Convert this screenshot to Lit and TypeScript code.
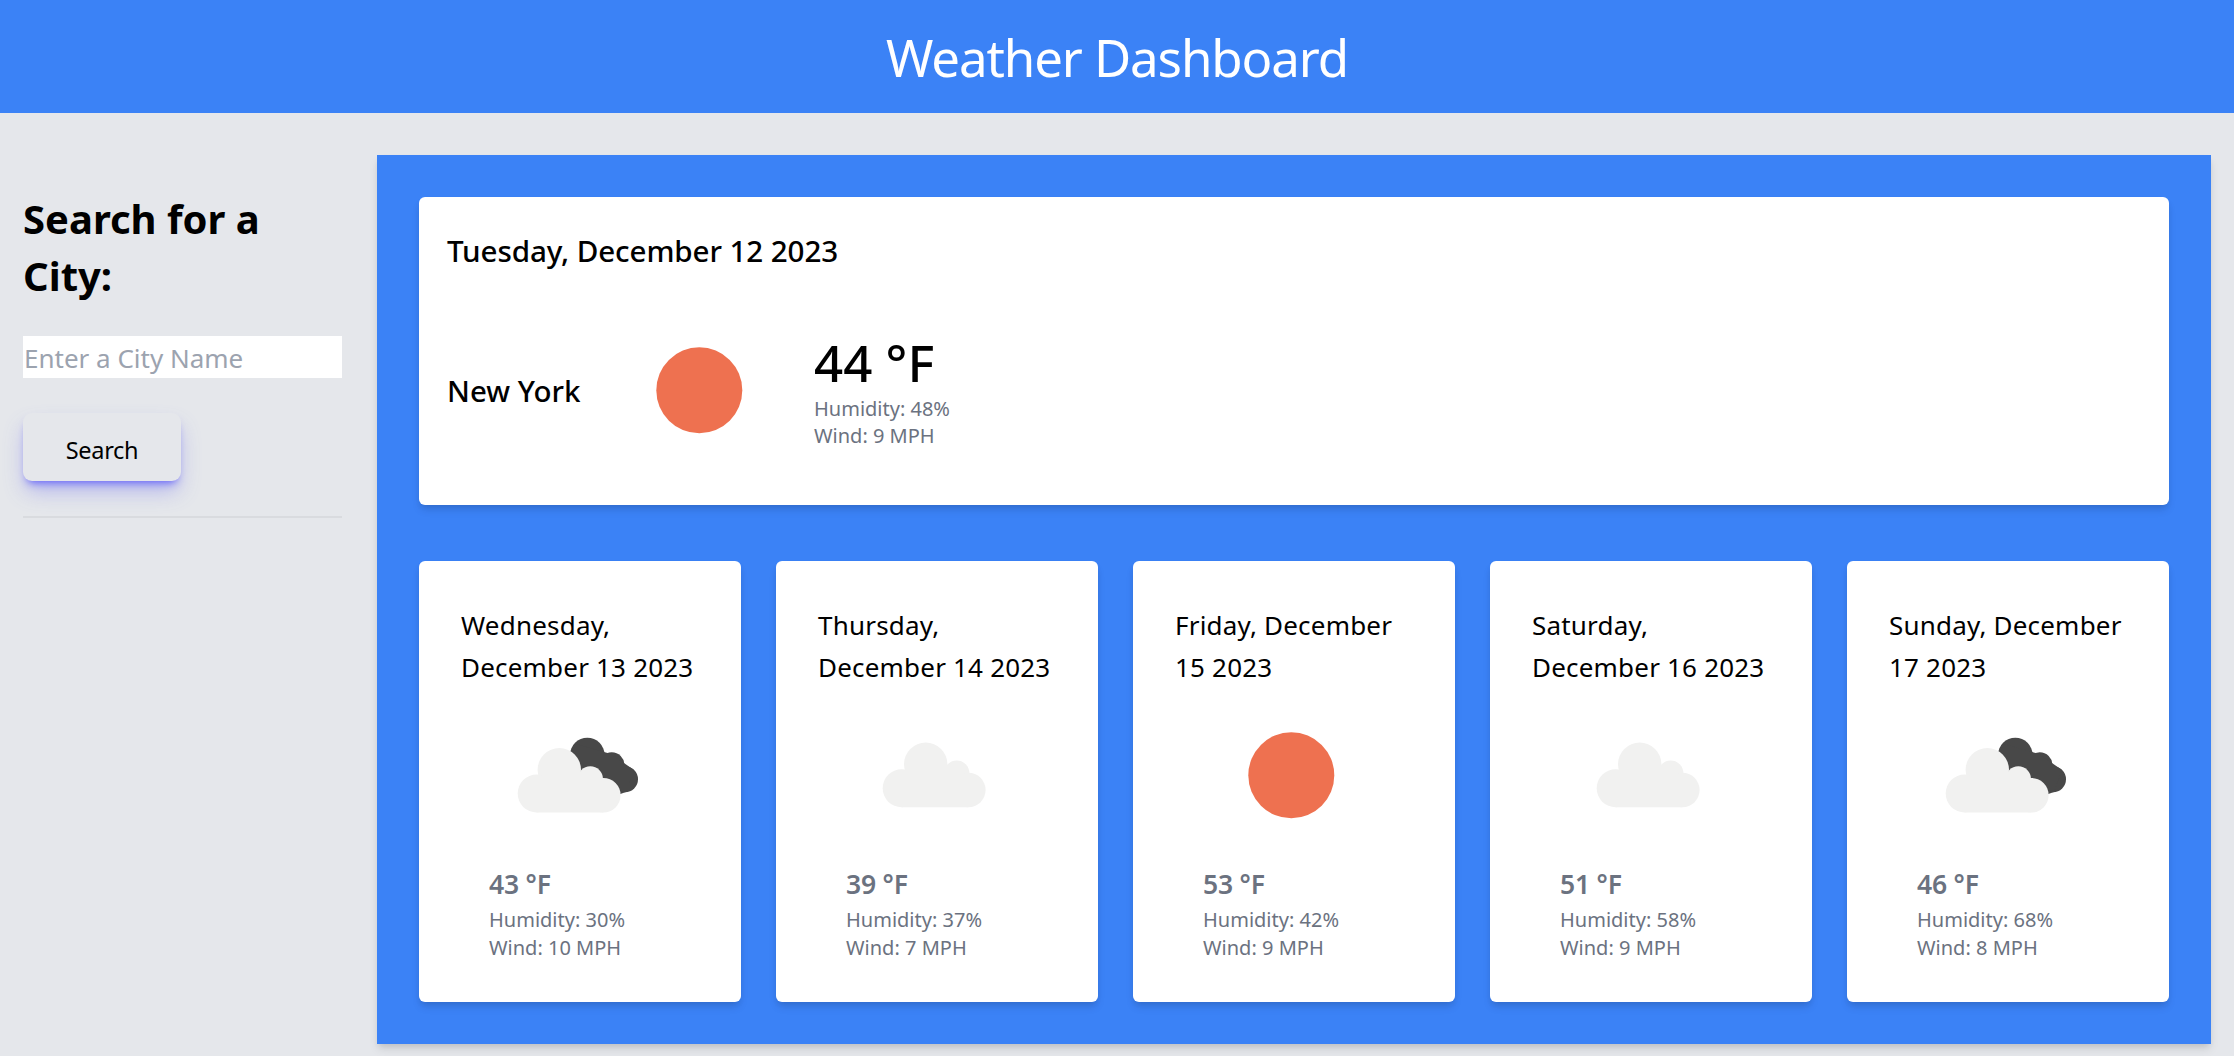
import { LitElement, html, css, svg } from 'lit';
import { customElement } from 'lit/decorators.js';

type Sky = 'clear' | 'cloudy' | 'broken';

const forecast: { date: string; sky: Sky; temp: number; humidity: number; wind: number }[] = [
  { date: 'Wednesday, December 13 2023', sky: 'broken', temp: 43, humidity: 30, wind: 10 },
  { date: 'Thursday, December 14 2023', sky: 'cloudy', temp: 39, humidity: 37, wind: 7 },
  { date: 'Friday, December 15 2023', sky: 'clear', temp: 53, humidity: 42, wind: 9 },
  { date: 'Saturday, December 16 2023', sky: 'cloudy', temp: 51, humidity: 58, wind: 9 },
  { date: 'Sunday, December 17 2023', sky: 'broken', temp: 46, humidity: 68, wind: 8 },
];

function skyIcon(sky: Sky) {
  let body;
  if (sky === 'clear') {
    body = svg`<circle cx="71.3" cy="71.3" r="43" fill="#ee7150"></circle>`;
  } else if (sky === 'cloudy') {
    body = svg`
      <g fill="#f1f1f0">
        <circle cx="62.7" cy="60.3" r="21.7"></circle>
        <circle cx="93.7" cy="69.3" r="12.7"></circle>
        <circle cx="38.7" cy="84.3" r="19"></circle>
        <circle cx="105.3" cy="86" r="17.3"></circle>
        <rect x="38.7" y="70" width="66.6" height="33.3"></rect>
      </g>`;
  } else {
    body = svg`
      <g fill="#484848">
        <circle cx="81.3" cy="51" r="17.3"></circle>
        <circle cx="105.7" cy="61" r="12.7"></circle>
        <circle cx="119" cy="75.3" r="13"></circle>
        <polygon points="70,40 105,50 128,66 120,88 100,95 60,70"></polygon>
      </g>
      <g fill="#f1f1f0">
        <circle cx="53.3" cy="65.8" r="21.7"></circle>
        <circle cx="84.3" cy="75" r="12.7"></circle>
        <circle cx="30.7" cy="89.5" r="19"></circle>
        <circle cx="97.3" cy="91.2" r="17.3"></circle>
        <rect x="30.7" y="75" width="66.6" height="33.5"></rect>
      </g>`;
  }
  return html`<svg class="icon" viewBox="0 0 142 142" width="142" height="142">${body}</svg>`;
}

@customElement('app-root')
export class AppRoot extends LitElement {
  static styles = css`
    :host {
      display: block;
      min-height: 1056px;
      background: #e5e7eb;
      color: #000;
      font-family: 'Noto Sans', 'Liberation Sans', sans-serif;
    }

    header {
      height: 113px;
      background: #3b82f6;
      color: #fff;
      display: flex;
      align-items: center;
      justify-content: center;
      font-size: 51px;
      letter-spacing: -1.1px;
    }

    main {
      display: flex;
      padding: 42px 23px 12px;
      gap: 35px;
    }

    .sidebar {
      width: 319px;
      flex: none;
      padding-top: 35px;
    }

    h2 {
      margin: 0 0 32px;
      font-size: 40px;
      line-height: 57px;
      font-weight: 700;
    }

    input {
      display: block;
      box-sizing: border-box;
      width: 100%;
      height: 42px;
      border: 0;
      padding: 2px 1px 0;
      background: #fff;
      font: inherit;
      font-size: 26px;
    }

    input::placeholder {
      color: #9ca3af;
      opacity: 1;
    }

    button {
      display: block;
      margin-top: 35px;
      width: 158px;
      height: 68px;
      border: 0;
      border-radius: 9px;
      padding: 5px 0 0;
      background: #e5e7eb;
      color: #000;
      font: inherit;
      font-size: 23.5px;
      letter-spacing: -0.3px;
      box-shadow: 0 12px 21px -3px rgba(99, 102, 241, 0.42), 0 6px 8px -5px #5a55ff;
    }

    .sidebar hr {
      margin: 35px 0 0;
      border: 0;
      border-top: 2px solid #d9dbdf;
    }

    .panel {
      flex: 1;
      min-width: 0;
      padding: 42px;
      background: #3b82f6;
      box-shadow: 0 6px 9px -1px rgba(0, 0, 0, 0.1), 0 3px 6px -2px rgba(0, 0, 0, 0.1);
    }

    .card {
      background: #fff;
      border-radius: 6px;
      box-shadow: 0 6px 9px -1px rgba(0, 0, 0, 0.1), 0 3px 6px -2px rgba(0, 0, 0, 0.1);
    }

    .today {
      padding: 28px 28px 44px;
    }

    .today h3 {
      margin: 0 0 43px;
      font-size: 29.6px;
      line-height: 51px;
      font-weight: 500;
      letter-spacing: -0.1px;
    }

    .today-row {
      display: flex;
      align-items: center;
    }

    .city {
      width: 181px;
      flex: none;
      font-size: 29.5px;
      font-weight: 500;
    }

    .icon {
      display: block;
      flex: none;
    }

    .today .readings {
      align-self: flex-start;
      margin: 15px 0 0 44px;
    }

    .today .temp {
      margin-bottom: 4px;
      font-size: 51px;
      line-height: 57px;
      font-weight: 500;
    }

    .detail {
      color: #6b7280;
      font-size: 20px;
      line-height: 27px;
    }

    .days {
      display: grid;
      grid-template-columns: repeat(5, 1fr);
      gap: 35px;
      margin-top: 56px;
    }

    .day {
      padding: 44px 43px 40px 42px;
    }

    .day h4 {
      margin: 0 0 16px;
      font-size: 26px;
      line-height: 41.5px;
      font-weight: 400;
      letter-spacing: 0.2px;
    }

    .day .icon {
      margin-left: 45px;
    }

    .day .readings {
      margin: 20px 0 0 28px;
    }

    .day .temp {
      margin-bottom: 4px;
      color: #6b7280;
      font-size: 26.5px;
      line-height: 36px;
      font-weight: 600;
      letter-spacing: -0.2px;
    }

    .day .detail {
      line-height: 28px;
    }
  `;

  render() {
    return html`
      <header>Weather Dashboard</header>
      <main>
        <aside class="sidebar">
          <h2>Search for a City:</h2>
          <input type="text" placeholder="Enter a City Name" />
          <button>Search</button>
          <hr />
        </aside>
        <section class="panel">
          <div class="card today">
            <h3>Tuesday, December 12 2023</h3>
            <div class="today-row">
              <div class="city">New York</div>
              ${skyIcon('clear')}
              <div class="readings">
                <div class="temp">44 °F</div>
                <div class="detail">Humidity: 48%</div>
                <div class="detail">Wind: 9 MPH</div>
              </div>
            </div>
          </div>
          <div class="days">
            ${forecast.map(
              (d) => html`
                <div class="card day">
                  <h4>${d.date}</h4>
                  ${skyIcon(d.sky)}
                  <div class="readings">
                    <div class="temp">${d.temp} °F</div>
                    <div class="detail">Humidity: ${d.humidity}%</div>
                    <div class="detail">Wind: ${d.wind} MPH</div>
                  </div>
                </div>
              `,
            )}
          </div>
        </section>
      </main>
    `;
  }
}
